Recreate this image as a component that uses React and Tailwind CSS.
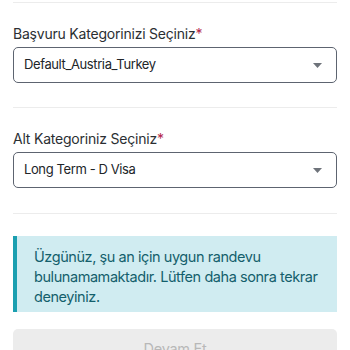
import React from 'react';

const Caret = () => (
  <svg width="9" height="5" viewBox="0 0 9 5" className="shrink-0">
    <path d="M0 0 L9 0 L4.5 5 Z" fill="#6e737a" />
  </svg>
);

const SelectField = ({ label, value }) => (
  <div>
    <label className="block text-[14px] leading-5 tracking-[-0.015em] text-[#2b2f33]">
      {label}
      <span className="text-[#b3264a]">*</span>
    </label>
    <div className="mt-[3px] h-[36px] flex items-center justify-between rounded-[5px] border border-[#5d6470] bg-white pl-[10px] pr-[14px]">
      <span className="text-[13px] tracking-[-0.03em] text-[#212529]">{value}</span>
      <Caret />
    </div>
  </div>
);

export default function App() {
  return (
    <div
      className="w-[350px] h-[350px] overflow-hidden bg-white px-[13px]"
      style={{ fontFamily: 'Inter, "Noto Sans", sans-serif' }}
    >
      <div className="mt-[2px] border-t border-[#ececec]" />
      <div className="pt-[21px] pb-[24px]">
        <SelectField label="Başvuru Kategorinizi Seçiniz" value="Default_Austria_Turkey" />
      </div>
      <div className="border-t border-[#ececec]" />
      <div className="pt-[21px] pb-[25px]">
        <SelectField label="Alt Kategoriniz Seçiniz" value="Long Term - D Visa" />
      </div>
      <div className="border-t border-[#ececec]" />

      <div className="mt-[22px] h-[76px] border-l-[4px] border-[#1b9fb0] bg-[#d0ecf1] pl-[17px] pr-[10px] pt-[11px] text-[14.5px] leading-5 tracking-[-0.03em] text-[#145f6c]">
        Üzgünüz, şu an için uygun randevu bulunamamaktadır. Lütfen daha sonra tekrar deneyiniz.
      </div>

      <button className="mt-[17px] h-[40px] w-full rounded-[5px] bg-[#ececec] text-[14.5px] tracking-[-0.02em] text-[#b8b8b8]">
        Devam Et
      </button>
    </div>
  );
}
